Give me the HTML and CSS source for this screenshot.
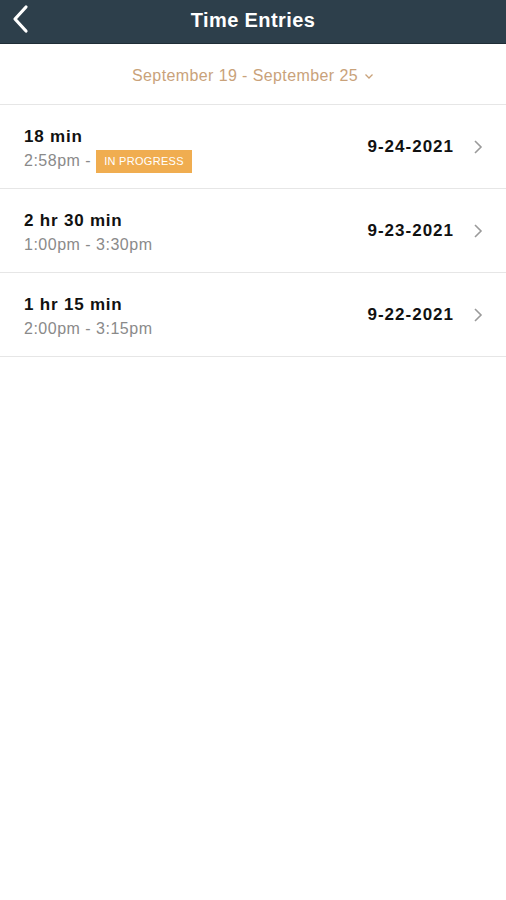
FILE: index.html
```html
<!DOCTYPE html>
<html>
<head>
<meta charset="utf-8">
<link rel="stylesheet" href="styles.css">
</head>
<body>
<header class="topbar">
  <svg class="back" width="20" height="30" viewBox="0 0 20 30"><path d="M16 3 L5 15 L16 27" fill="none" stroke="#fff" stroke-width="3.2" stroke-linecap="round" stroke-linejoin="round"/></svg>
  <h1 class="title">Time Entries</h1>
</header>
<div class="range">
  <span>September 19 - September 25</span>
  <svg class="down" width="10" height="7" viewBox="0 0 10 7"><path d="M1.5 1.5 L5 5 L8.5 1.5" fill="none" stroke="#c9a27a" stroke-width="1.3"/></svg>
</div>
<ul class="list">
  <li class="entry">
    <div class="info">
      <div class="dur">18 min</div>
      <div class="time">2:58pm - <span class="badge">IN PROGRESS</span></div>
    </div>
    <div class="date">9-24-2021</div>
    <svg class="chev" width="10" height="16" viewBox="0 0 10 16"><path d="M2 2 L8 8 L2 14" fill="none" stroke="#9a9a9a" stroke-width="1.6"/></svg>
  </li>
  <li class="entry">
    <div class="info">
      <div class="dur">2 hr 30 min</div>
      <div class="time">1:00pm - 3:30pm</div>
    </div>
    <div class="date">9-23-2021</div>
    <svg class="chev" width="10" height="16" viewBox="0 0 10 16"><path d="M2 2 L8 8 L2 14" fill="none" stroke="#9a9a9a" stroke-width="1.6"/></svg>
  </li>
  <li class="entry">
    <div class="info">
      <div class="dur">1 hr 15 min</div>
      <div class="time">2:00pm - 3:15pm</div>
    </div>
    <div class="date">9-22-2021</div>
    <svg class="chev" width="10" height="16" viewBox="0 0 10 16"><path d="M2 2 L8 8 L2 14" fill="none" stroke="#9a9a9a" stroke-width="1.6"/></svg>
  </li>
</ul>
</body>
</html>
```
FILE: styles.css
```css
* { box-sizing: border-box; }
body {
  margin: 0;
  background: #fff;
  font-family: "Liberation Sans", Arial, sans-serif;
  color: #111;
}
.topbar {
  height: 44px;
  background: #2d3f4b;
  display: flex;
  align-items: center;
  justify-content: center;
  position: relative;
  border-bottom: 1px solid #1f2d36;
}
.back {
  position: absolute;
  left: 10px;
  top: 4px;
}
.title {
  margin: 0;
  color: #fff;
  font-size: 20px;
  font-weight: bold;
  letter-spacing: 0.4px;
  margin-top: -2px;
}
.range {
  height: 61px;
  padding-top: 3px;
  display: flex;
  align-items: center;
  justify-content: center;
  gap: 6px;
  color: #c9a27a;
  font-size: 16px;
  letter-spacing: 0.4px;
  border-bottom: 1px solid #e6e6e6;
}
.range .down { margin-top: 1px; }
.list {
  list-style: none;
  margin: 0;
  padding: 0;
}
.entry {
  height: 84px;
  display: flex;
  align-items: center;
  padding: 0 23px 0 24px;
  border-bottom: 1px solid #e6e6e6;
}
.info {
  flex: 1;
  display: flex;
  flex-direction: column;
  gap: 3px;
  margin-top: 6px;
}
.dur {
  font-size: 17px;
  line-height: 20px;
  font-weight: bold;
  letter-spacing: 0.8px;
  color: #111;
}
.time {
  font-size: 16px;
  letter-spacing: 0.5px;
  color: #8a8a8a;
  min-height: 23px;
  display: flex;
  align-items: center;
  gap: 4px;
}
.badge {
  background: #f0ad50;
  color: #fff;
  font-size: 11px;
  letter-spacing: 0.3px;
  height: 23px;
  padding: 0 8px;
  display: inline-flex;
  align-items: center;
  margin-left: 1px;
}
.date {
  font-size: 17px;
  font-weight: bold;
  letter-spacing: 1px;
  color: #111;
  margin-right: 19px;
}
.chev { flex: none; }
```
